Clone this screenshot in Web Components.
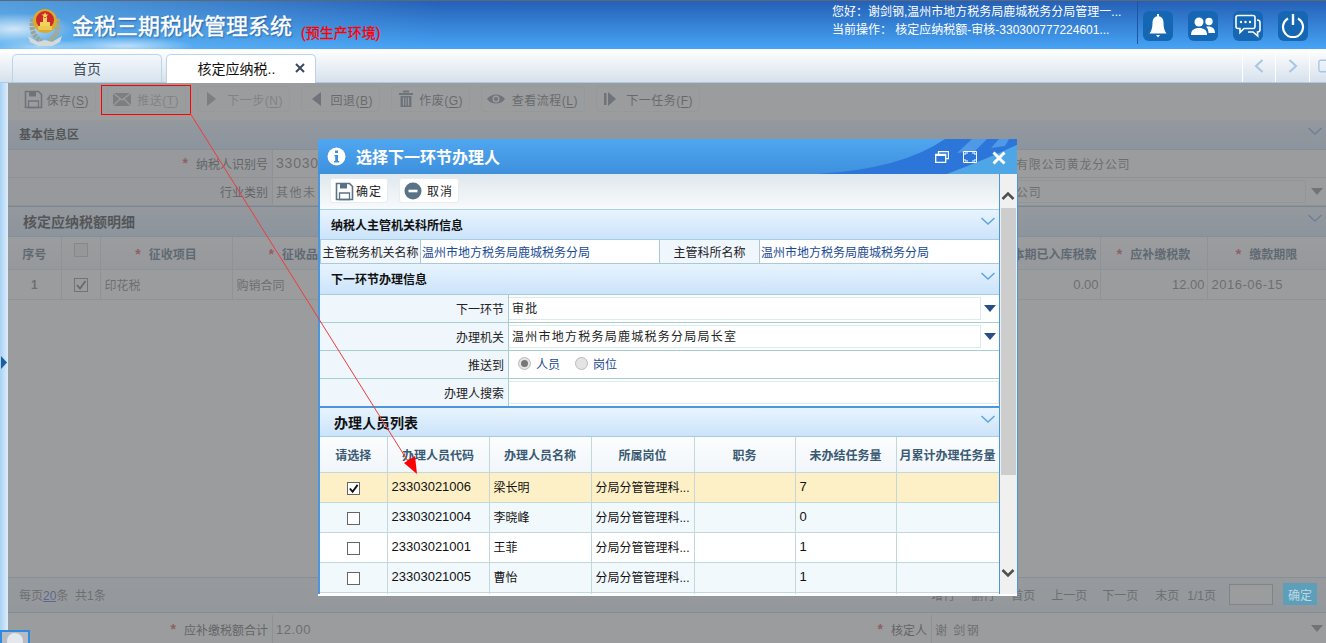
<!DOCTYPE html>
<html lang="zh">
<head>
<meta charset="utf-8">
<title>金税三期税收管理系统</title>
<style>
html, body { margin: 0; height: 100%; overflow: hidden; }
body { font: 12px "Liberation Sans", "Noto Sans CJK SC", sans-serif; color: #333; background: #fff; position: relative; }
</style>
</head>
<body>
<app-header></app-header>
<tab-strip></tab-strip>
<work-area></work-area>
<handler-dialog></handler-dialog>
<red-note></red-note>

<script>
const ICONS = {
    save: '<path d="M2.500 2.500h13l3 3v13h-16z" fill="none" stroke="currentColor" stroke-width="1.600"/><path d="M6 2.500h7v5H6z" fill="currentColor"/><path d="M5.500 12h10v6.500h-10z" fill="none" stroke="currentColor" stroke-width="1.300"/>',
    mail: '<path d="M1 4h18v13H1z" fill="currentColor"/><path d="M1 4l9 7 9-7M1 17l7-7M19 17l-7-7" fill="none" stroke="#fff" stroke-width="1.200"/>',
    next: '<path d="M5 3l9 7-9 7z" fill="currentColor"/>',
    back: '<path d="M15 3l-9 7 9 7z" fill="currentColor"/>',
    trash: '<path d="M7 2.500h6M3 5h14" stroke="currentColor" stroke-width="2"/><path d="M4.500 7h11v11h-11z" fill="currentColor"/><path d="M7.500 8.500v8M10 8.500v8M12.500 8.500v8" stroke="#fff"/>',
    eye: '<path d="M1 10c4-6 14-6 18 0-4 6-14 6-18 0z" fill="currentColor"/><circle cx="10" cy="10" r="3.500" fill="#fff"/><circle cx="10" cy="10" r="2" fill="currentColor"/>',
    last: '<path d="M3 4h2.500v12H3z" fill="currentColor"/><path d="M7 3l8 7-8 7z" fill="currentColor"/>',
    cancel: '<circle cx="10" cy="10" r="8.500" fill="currentColor"/><path d="M5.500 8.700h9v2.600h-9z" fill="#fff"/>'
}

const chevron = (color) => `<svg width="16" height="10" viewBox="0 0 16 10"><path d="M1.500 2l6.500 6 6.500-6" fill="none" stroke="${color}" stroke-width="1.400"/></svg>`
const caret = (color) => `<svg width="12" height="7" viewBox="0 0 12 7"><path d="M0 0h12L6 7z" fill="${color}"/></svg>`

class AppHeader extends HTMLElement {
    constructor() {
        super()
        this.attachShadow({ mode: "open" })
    }
    connectedCallback() {
        this.shadowRoot.innerHTML = `
        <style>
            :host {
                display: flex; align-items: stretch; height: 49px; box-sizing: border-box; color: #fff;
                border-top: 1px solid #5a6878;
                background:
                    radial-gradient(ellipse 60px 16px at 14px 28px, rgba(255,255,255,.72), transparent),
                    radial-gradient(ellipse 70px 9px at 125px 45px, rgba(255,255,255,.6), transparent),
                    radial-gradient(ellipse 50px 8px at 40px 46px, rgba(255,255,255,.45), transparent),
                    linear-gradient(90deg, rgba(110,190,240,.65), rgba(110,190,240,0) 440px),
                    linear-gradient(180deg, #2460b6, #47a4f5);
            }
            .logo { margin: 6px 0 0 27px; width: 36px; height: 41px; }
            h1 { margin: 12px 0 0 9px; font-size: 22px; line-height: 28px; font-weight: 400; -webkit-text-stroke: .4px #fff; text-shadow: 1px 1px 2px rgba(0,40,100,.6); white-space: nowrap; }
            .env { margin: 24px 0 0 9px; font-size: 14px; line-height: 17px; color: #f00; font-weight: 400; -webkit-text-stroke: .3px #f00; white-space: nowrap; }
            .user { margin-left: auto; width: 305px; font-size: 12px; line-height: 18px; padding-top: 2px; white-space: nowrap; }
            .icons { display: flex; gap: 15px; align-items: center; width: 189px; box-sizing: border-box; border-left: 1px solid #1d56a0; padding-left: 5px; margin-bottom: 5px; height: 43px; }
            .ic { width: 30px; height: 30px; border-radius: 6px; background: #1567b3; display: flex; align-items: center; justify-content: center; margin-top: 6px; }
        </style>
        <svg class="logo" viewBox="0 0 36 41">
            <path d="M6 12C3 22 7 31 15 34" fill="none" stroke="#9aa394" stroke-width="5" stroke-dasharray="3 1"/>
            <path d="M30 12c3 10-1 19-9 22" fill="none" stroke="#a8a888" stroke-width="5" stroke-dasharray="3 1"/>
            <path d="M1 29l10 6 7-2 7 2 10-6-2 6-8 4H11l-8-4z" fill="#d4d9da"/>
            <circle cx="18" cy="14" r="12" fill="#d8ab2f"/>
            <circle cx="18" cy="13" r="9" fill="#cb2a28"/>
            <path d="M11 19h14v4H11z" fill="#eec94f"/>
            <path d="M13 15h10v4H13zM16 11h4v4h-4z" fill="#f3d35f"/>
            <path d="M18 5l1 2.500h2.500l-2 1.500.8 2.500-2.300-1.600-2.300 1.600.8-2.500-2-1.500H17z" fill="#f7da5e"/>
        </svg>
        <h1>金税三期税收管理系统</h1>
        <span class="env">(预生产环境)</span>
        <div class="user">
            <div>您好：谢剑钢,温州市地方税务局鹿城税务分局管理一...</div>
            <div>当前操作： 核定应纳税额-审核-330300777224601...</div>
        </div>
        <div class="icons">
            <div class="ic"><svg width="18" height="24" viewBox="0 0 18 24"><path d="M8 0h2v2.200c3 .6 4.500 3 4.500 6.300 0 5 .8 8 3 11H.5c2.200-3 3-6 3-11C3.500 5.200 5 2.800 8 2.200z" fill="#fff"/><path d="M7 21h4l-2 2.500z" fill="#fff"/></svg></div>
            <div class="ic"><svg width="24" height="18" viewBox="0 0 24 18"><circle cx="8" cy="5" r="4.500" fill="#fff"/><path d="M0 18c0-5 3-7 8-7s8 2 8 7z" fill="#fff"/><circle cx="18" cy="4.500" r="3.700" fill="#fff"/><path d="M15 9.800c5-1 9 1 9 6.200h-6.500c0-3-1-5-2.500-6.200z" fill="#fff"/></svg></div>
            <div class="ic"><svg width="26" height="24" viewBox="0 0 26 24"><path d="M3 1.500h15c1.500 0 2 .8 2 2v9c0 1.300-.7 2-2 2H9l-4 4v-4H3c-1.300 0-2-.7-2-2v-9c0-1.200.7-2 2-2z" fill="none" stroke="#fff" stroke-width="1.600"/><path d="M22 6c2 0 3 1 3 2.500v7c0 1.500-1 2.500-2.500 2.500l.2 4-4.700-4h-5" fill="none" stroke="#fff" stroke-width="1.600"/><circle cx="6" cy="8" r="1.200" fill="#fff"/><circle cx="10.500" cy="8" r="1.200" fill="#fff"/><circle cx="15" cy="8" r="1.200" fill="#fff"/></svg></div>
            <div class="ic"><svg width="24" height="24" viewBox="0 0 24 24"><path d="M7 4.500a10 10 0 1 0 10 0" fill="none" stroke="#fff" stroke-width="2.200"/><path d="M12 0v11" stroke="#fff" stroke-width="2.400"/></svg></div>
        </div>`
    }
}

class TabStrip extends HTMLElement {
    constructor() {
        super()
        this.attachShadow({ mode: "open" })
    }
    connectedCallback() {
        this.shadowRoot.innerHTML = `
        <style>
            :host {
                display: flex; height: 34px; box-sizing: border-box; padding: 5px 0 0 12px; gap: 4px;
                background: linear-gradient(180deg, #fff, #d6e1ec);
                border-bottom: 1px solid #a9cbe9;
            }
            .tab {
                width: 150px; box-sizing: border-box; border: 1px solid #bcd3e8; border-bottom: 0; border-radius: 5px 5px 0 0;
                display: flex; align-items: center; justify-content: center; font-size: 14px; color: #3d4a58; position: relative; padding-bottom: 2px;
                background: linear-gradient(180deg, #f4f8fc, #d8e3ee);
            }
            .tab:first-child span { margin-right: 15px; }
            .tab.on { background: #fff; color: #111; margin-bottom: -1px; }
            .tab.on span { margin-right: 9px; }
            .x { position: absolute; right: 10px; top: 8px; }
            .nav { margin: -5px 0 0 auto; display: flex; }
            .nav div { width: 32px; border-left: 1px solid #fff; display: flex; align-items: center; justify-content: center; }
            .nav div + div { width: 33px; }
            .nav div:last-child { width: 17px; justify-content: flex-start; padding-left: 8px; box-sizing: border-box; }
        </style>
        <div class="tab"><span>首页</span></div>
        <div class="tab on"><span>核定应纳税..</span>
            <svg class="x" width="10" height="10" viewBox="0 0 10 10"><path d="M1 1l8 8M9 1l-8 8" stroke="#3a4a5e" stroke-width="2"/></svg>
        </div>
        <div class="nav">
            <div><svg width="10" height="16" viewBox="0 0 10 16"><path d="M8.500 2L2 8l6.500 6" fill="none" stroke="#a7c5e4" stroke-width="2"/></svg></div>
            <div><svg width="10" height="16" viewBox="0 0 10 16"><path d="M1.500 2L8 8l-6.500 6" fill="none" stroke="#a7c5e4" stroke-width="2"/></svg></div>
            <div><svg width="9" height="16" viewBox="0 0 9 16"><path d="M9 1.500H3a2 2 0 0 0-2 2v9a2 2 0 0 0 2 2h6" fill="none" stroke="#a7c5e4" stroke-width="1.500"/></svg></div>
        </div>`
    }
}

class ToolBtn extends HTMLElement {
    constructor() {
        super()
        this.attachShadow({ mode: "open" })
    }
    connectedCallback() {
        const icon = ICONS[this.getAttribute('icon')]
        const w = this.getAttribute('w') || 60
        this.shadowRoot.innerHTML = `
        <style>
            :host {
                display: flex; align-items: center; justify-content: space-between; box-sizing: border-box;
                width: ${w}px; height: 26px; padding: 0 6px 0 4px; border: 1px solid #f0f0f0; border-radius: 3px;
                background: #fff; font-size: 12px; letter-spacing: .5px; white-space: nowrap;
                color: var(--btn-color, #555);
            }
            svg { width: 20px; height: 20px; color: var(--icon-color, #6a7885); flex: none; }
            ::slotted(u) { text-underline-offset: 2px; }
        </style>
        <svg viewBox="0 0 20 20">${icon}</svg><span><slot></slot></span>`
    }
}

class SectionHead extends HTMLElement {
    constructor() {
        super()
        this.attachShadow({ mode: "open" })
    }
    connectedCallback() {
        this.shadowRoot.innerHTML = `
        <style>
            :host {
                display: flex; align-items: center; justify-content: space-between; box-sizing: border-box;
                height: 30px; padding: 0 3px 1px var(--head-pad, 11px); font-size: 12px; font-weight: 700; color: #111;
                background: linear-gradient(180deg, #e8f4fe, #cbe3fa);
            }
            svg { margin-top: -6px; }
        </style>
        <span><slot></slot></span>${chevron('#5aa2e0')}`
    }
}

class WorkArea extends HTMLElement {
    constructor() {
        super()
        this.attachShadow({ mode: "open" })
    }
    connectedCallback() {
        const star = '<i>*</i>'
        const box = caret('#777')
        this.shadowRoot.innerHTML = `
        <style>
            :host { display: flex; height: 560px; position: relative; }
            .rail { width: 8px; flex: none; background: linear-gradient(90deg, #a9d2f4, #dcedfb); display: flex; align-items: center; }
            .rail svg { margin-top: -2px; }
            .main { flex: 1; min-width: 0; display: flex; flex-direction: column; background: #fff; overflow: hidden; color: #444; }
            .bar { display: flex; gap: 11px; align-items: center; height: 37px; padding: 0 0 5px 10px; box-sizing: border-box; background: #fff; flex: none; }
            section-head { flex: none; border-bottom: 1px solid #b4d2e6; }
            .form { display: grid; grid-template-columns: 264px 744px 1fr; flex: none; }
            .form > div { border-bottom: 1px solid #c8dfe5; display: flex; align-items: center; padding-bottom: 1px; box-sizing: content-box; height: 26px; }
            .lab { justify-content: flex-end; padding-right: 4px; background: #f0f6fb; }
            .val { border-left: 1px solid #c8dfe5; padding-left: 3px; color: #666; letter-spacing: 1.5px; }
            .val.num { font-size: 14px; letter-spacing: .8px; }
            .cut { display: inline-block; width: 42px; overflow: hidden; white-space: nowrap; vertical-align: middle; }
            .far { letter-spacing: .7px; color: #666; position: relative; }
            .far svg { position: absolute; right: 3px; top: 10px; }
            .far.box::before { content: ""; position: absolute; left: -4px; right: 20px; top: 2px; bottom: 2px; border: 1px solid #dfe9ee; }
            i { color: #d9303a; font-style: normal; font-weight: 700; font-size: 14px; margin-right: 8px; }
            table { border-collapse: collapse; table-layout: fixed; width: 1318px; flex: none; }
            td, th { border: 1px solid #d3e2e8; border-width: 0 1px 1px 0; padding: 0 4px; font-size: 12px; white-space: nowrap; overflow: hidden; }
            th { height: 32px; font-weight: 700; color: #38566e; background: linear-gradient(180deg, #fff, #eef3f8); }
            td { height: 29px; color: #666; background: #fff; }
            .box2 { display: inline-block; width: 12px; height: 12px; border: 1px solid #777; vertical-align: middle; position: relative; background: #fff; }
            .box2.light { border-color: #bbb; background: #eee; margin-top: -8px; }
            .box2 svg { position: absolute; left: 0; top: 0; }
            .space { flex: 1; }
            .pager { height: 36px; flex: none; box-sizing: border-box; border-top: 1px solid #c0d6e6; border-bottom: 1px solid #a9cbe6; display: flex; align-items: center; padding: 0 9px 2px 11px; background: linear-gradient(180deg,#f2f7fb,#e6eff6); color: #666; }
            .pager u { color: #3a49c0; }
            .links { margin-left: auto; display: flex; align-items: center; }
            .links b { font-weight: 400; }
            .in { width: 44px; height: 21px; box-sizing: border-box; border: 1px solid #aaa; background: #fff; margin: 0 10px 0 13px; }
            .ok { width: 34px; height: 22px; background: #5d9fb9; color: #bcd8e6; display: flex; align-items: center; justify-content: center; position: relative; z-index: 2; }
            .foot { display: grid; grid-template-columns: 264px 396px 263px 1fr; height: 28px; margin-top: 2px; flex: none; }
            .foot div { display: flex; align-items: center; }
            .foot .lab { background: #fff; }
            .foot .v { border-left: 1px solid #c8dfe5; padding-left: 3px; color: #666; font-size: 13px; position: relative; letter-spacing: .5px; }
            .foot .v svg { position: absolute; right: 3px; top: 10px; }
            .mask { position: absolute; left: 8px; top: 0; right: 0; bottom: 0; background: rgba(112,114,117,.7); }
            .badge { position: absolute; left: 0; bottom: 0; width: 30px; height: 13px; box-sizing: border-box; border: 2px solid #2e8be0; border-bottom: 0; background: #b8bcc2; display: flex; justify-content: center; overflow: hidden; }
            .badge span { width: 16px; height: 16px; border-radius: 50%; background: #e4e8ec; margin-top: 1px; }
        </style>
        <div class="rail"><svg width="7" height="13" viewBox="0 0 7 13"><path d="M1 0l6 6.500L1 13z" fill="#1b5ea8"/></svg></div>
        <div class="main">
            <div class="bar">
                <tool-btn icon="save" w="78">保存(<u>S</u>)</tool-btn>
                <tool-btn icon="mail" w="79" style="--btn-color:#aaa;--icon-color:#999">推送(<u>T</u>)</tool-btn>
                <tool-btn icon="next" w="93" style="--btn-color:#aaa;--icon-color:#999">下一步(<u>N</u>)</tool-btn>
                <tool-btn icon="back" w="79">回退(<u>B</u>)</tool-btn>
                <tool-btn icon="trash" w="79">作废(<u>G</u>)</tool-btn>
                <tool-btn icon="eye" w="104">查看流程(<u>L</u>)</tool-btn>
                <tool-btn icon="last" w="104">下一任务(<u>F</u>)</tool-btn>
            </div>
            <section-head style="padding-bottom:2px">基本信息区</section-head>
            <div class="form">
                <div class="lab">${star}纳税人识别号</div><div class="val num"><span class="cut">330300</span></div><div class="far">有限公司黄龙分公司</div>
                <div class="lab">行业类别</div><div class="val"><span class="cut">其他未</span></div><div class="far box">公司${box}</div>
            </div>
            <section-head style="--head-pad:15px;height:31px;font-size:14px;border-top:1px solid #8fb5d6">核定应纳税额明细</section-head>
            <table>
                <colgroup><col style="width:53px"><col style="width:39px"><col style="width:132px"><col style="width:132px"><col style="width:736px"><col style="width:107px"><col style="width:119px"></colgroup>
                <tr><th>序号</th><th><span class="box2 light"></span></th><th>${star}征收项目</th><th style="text-align:left;padding-left:36px"><span class="cut" style="width:50px">${star}征收品</span></th><th style="text-align:right;padding-right:3px">本期已入库税款</th><th>${star}应补缴税款</th><th>${star}缴款期限</th></tr>
                <tr><td style="text-align:center;font-weight:700">1</td><td style="text-align:center"><span class="box2"><svg width="12" height="12" viewBox="0 0 12 12"><path d="M2 6l3 3.500L10.500 2" fill="none" stroke="#555" stroke-width="1.800"/></svg></span></td><td>印花税</td><td>购销合同</td><td style="text-align:right;padding-right:1px;font-size:13px">0.00</td><td style="text-align:right;padding-right:2px;font-size:13px">12.00</td><td style="padding-left:4px;letter-spacing:.5px;font-size:13px">2016-06-15</td></tr>
            </table>
            <div class="space"></div>
            <div class="pager">
                <span>每页<u>20</u>条&nbsp;&nbsp;共1条</span>
                <div class="links">
                    <span style="width:40px">增行</span><span style="width:40px">删行</span><span style="width:40px">首页</span><span style="width:51px">上一页</span><span style="width:53px">下一页</span><span style="width:32px">末页</span><b>1/1页</b>
                    <span class="in"></span><span class="ok">确定</span>
                </div>
            </div>
            <div class="foot">
                <div class="lab">${star}应补缴税额合计</div><div class="v">12.00</div>
                <div class="lab">${star}核定人</div><div class="v" style="font-size:12px;letter-spacing:1.500px">谢 剑钢${box}</div>
            </div>
        </div>
        <div class="mask"></div>
        <div class="badge"><span></span></div>`
    }
}

class HandlerDialog extends HTMLElement {
    constructor() {
        super()
        this.attachShadow({ mode: "open" })
    }
    connectedCallback() {
        const rows = [
            ['23303021006', '梁长明', '7', true],
            ['23303021004', '李晓峰', '0'],
            ['23303021001', '王菲', '1'],
            ['23303021005', '曹怡', '1']
        ]
        const check = '<svg width="11" height="11" viewBox="0 0 12 12"><path d="M2 6l3 3.500L10.500 2" fill="none" stroke="#111" stroke-width="2"/></svg>'
        const rowHtml = rows.map((r) => `
            <tr class="${r[3] ? 'sel' : ''}"><td class="c"><span class="ck">${r[3] ? check : ''}</span></td><td class="n">${r[0]}</td><td>${r[1]}</td><td>分局分管管理科...</td><td></td><td class="n">${r[2]}</td><td></td></tr>`).join('')
        const arrow = caret('#2a4f86')
        this.shadowRoot.innerHTML = `
        <style>
            :host {
                position: absolute; left: 318px; top: 139px; width: 700px; height: 457px;
                display: flex; flex-direction: column; color: #222; font-size: 12px;
            }
            .title {
                width: 699px; height: 35px; flex: none; display: flex; align-items: center; position: relative; color: #fff; overflow: hidden;
                background: linear-gradient(180deg, #4fa6ef, #3e90dd);
            }
            .title > svg.sw { position: absolute; right: 0; top: 0; }
            .title h2 { margin: -2px 0 0 10px; font-size: 16px; font-weight: 700; position: relative; }
            .info { margin-left: 9px; position: relative; }
            .ctl { position: absolute; right: 11px; top: 12px; display: flex; gap: 14px; align-items: flex-start; }
            .ctl svg:last-child { margin-left: 1px; }
            .body { height: 420px; flex: none; display: flex; background: #fff; }
            .left { width: 679px; flex: none; border-left: 2px solid #4a97dd; border-right: 1px solid #4a97dd; overflow: hidden; display: flex; flex-direction: column; }
            .strip { width: 699px; height: 2px; background: #fff; flex: none; }
            .tools { height: 36px; flex: none; box-sizing: border-box; display: flex; gap: 11px; align-items: flex-start; padding: 4px 0 0 10px; background: linear-gradient(180deg, #dfe8ee, #f8fafb); border-bottom: 1px solid #a9d0ec; --btn-color: #222; --icon-color: #5a7286; }
            .tools tool-btn { height: 25px; border-color: #e8ecef; padding: 0 5px 0 3px; letter-spacing: 1px; }
            section-head { flex: none; border-bottom: 1px solid #a5cfe0; }
            .a { display: grid; grid-template-columns: 101px 238px 101px 1fr; height: 24px; box-sizing: border-box; flex: none; border-bottom: 1px solid #a9c9d4; }
            .a div { display: flex; align-items: center; white-space: nowrap; overflow: hidden; padding-bottom: 1px; }
            .a .l { background: #eff6fc; justify-content: center; border: 0 solid #a9c9d4; border-width: 0 1px; }
            .a .v { color: #1a4a94; padding-left: 1px; }
            .b { display: grid; grid-template-columns: 189px 1fr; height: 28px; flex: none; border-bottom: 1px solid #a6cfd1; box-sizing: border-box; }
            .b .l { background: #eff6fc; display: flex; align-items: center; justify-content: flex-end; padding: 0 4px 1px 0; border-right: 1px solid #a6cfd1; }
            .b .v { display: flex; align-items: center; position: relative; padding: 0 0 3px 3px; letter-spacing: 1.250px; }
            .b .v.sel::before { content: ""; position: absolute; left: 0; right: 18px; top: 2px; bottom: 2px; border: 1px solid #dcebed; border-left: 0; }
            .b .v.wide::before { right: 0; }
            .b .v svg { position: absolute; right: 3px; top: 10px; }
            .r { display: flex; align-items: center; margin: 0 9px 0 6px; color: #1a4a94; letter-spacing: 0; }
            .r span { width: 11px; height: 11px; border-radius: 50%; background: #e4e4e4; border: 1px solid #bbb; margin-right: 5px; display: flex; align-items: center; justify-content: center; }
            .r span::after { content: ""; width: 7px; height: 7px; border-radius: 50%; background: var(--dot, transparent); }
            .list { --head-pad: 14px; border-top: 2px solid #4a97dd; height: 31px; margin-top: -1px; font-size: 14px; }
            table { border-collapse: collapse; table-layout: fixed; width: 679px; }
            th, td { border: 1px solid #c2d8da; border-width: 0 1px 1px 0; padding: 0 4px 2px; white-space: nowrap; overflow: hidden; font-size: 12px; }
            th { height: 34px; color: #3a5a74; font-weight: 700; background: linear-gradient(180deg, #fbfcfd, #f1f6fa); padding: 0; }
            td { height: 27px; color: #111; text-align: left; }
            td.n { font-size: 13px; }
            tr:nth-child(odd) td { background: #f1f9fd; }
            tr.sel td { background: #fdf0c6; }
            tr.blank td { background: #fff; }
            td.c { text-align: center; padding: 0; }
            .ck { display: inline-block; width: 11px; height: 11px; border: 1px solid #666; background: #fff; vertical-align: middle; position: relative; }
            .ck svg { position: absolute; left: 0; top: 0; }
            .sb { width: 17px; flex: none; box-sizing: content-box; border-right: 1px solid #4a97dd; background: #f0f0f0; position: relative; }
            .sb .t { width: 15px; left: 1px; position: absolute; top: 34px; height: 267px; background: #cdcdcd; }
            .sb svg { position: absolute; }
        </style>
        <div class="title">
            <svg class="sw" width="330" height="35" viewBox="0 0 330 35"><path d="M130 35Q215 30 258 0H330V6Q300 20 260 35z" fill="#2b76d8"/><path d="M260 35Q300 20 330 6V35z" fill="#4ea6e6"/><path d="M285 0l-15 14 18-2 12-12zM312 0l-8 9 14-2 4-7z" fill="#4f99e8"/></svg>
            <svg class="info" width="19" height="19" viewBox="0 0 19 19"><circle cx="9.500" cy="9.500" r="9" fill="#fff"/><path d="M8 3.500h3V6H8zM7.500 8H11v6h1.200v1.500H7V14h1.200V9.500h-.7z" fill="#3e90dd"/></svg>
            <h2>选择下一环节办理人</h2>
            <div class="ctl">
                <svg width="14" height="12" viewBox="0 0 14 12"><path d="M3.500 3V.700h10v7H11" fill="none" stroke="#fff" stroke-width="1.300"/><path d="M.700 3.500h10v8H.700z" fill="none" stroke="#fff" stroke-width="1.300"/><path d="M.700 4h10" stroke="#fff" stroke-width="2"/></svg>
                <svg width="14" height="12" viewBox="0 0 14 12"><path d="M.500.500h13v11H.500z" fill="none" stroke="#fff"/><path d="M2 4V2h3M9 2h3v2M12 8v2H9M5 10H2V8" fill="none" stroke="#fff"/></svg>
                <svg width="14" height="14" viewBox="0 0 14 14"><path d="M1.500 1.500l11 11M12.500 1.500l-11 11" stroke="#fff" stroke-width="3"/></svg>
            </div>
        </div>
        <div class="body">
            <div class="left">
                <div class="tools">
                    <tool-btn icon="save" w="58">确定</tool-btn>
                    <tool-btn icon="cancel" w="60">取消</tool-btn>
                </div>
                <section-head>纳税人主管机关科所信息</section-head>
                <div class="a">
                    <div class="l">主管税务机关名称</div><div class="v">温州市地方税务局鹿城税务分局</div>
                    <div class="l">主管科所名称</div><div class="v">温州市地方税务局鹿城税务分局</div>
                </div>
                <section-head style="height:31px">下一环节办理信息</section-head>
                <div class="b"><div class="l">下一环节</div><div class="v sel">审批${arrow}</div></div>
                <div class="b"><div class="l">办理机关</div><div class="v sel">温州市地方税务局鹿城税务分局局长室${arrow}</div></div>
                <div class="b"><div class="l">推送到</div><div class="v"><div class="r" style="--dot:#777"><span></span>人员</div><div class="r"><span></span>岗位</div></div></div>
                <div class="b"><div class="l">办理人搜索</div><div class="v sel wide"></div></div>
                <section-head class="list">办理人员列表</section-head>
                <table>
                    <colgroup><col style="width:67px"><col style="width:102px"><col style="width:102px"><col style="width:103px"><col style="width:101px"><col style="width:101px"><col style="width:103px"></colgroup>
                    <tr><th style="height:35px">请选择</th><th>办理人员代码</th><th>办理人员名称</th><th>所属岗位</th><th>职务</th><th>未办结任务量</th><th>月累计办理任务量</th></tr>
                    ${rowHtml}
                    <tr class="blank"><td></td><td></td><td></td><td></td><td></td><td></td><td></td></tr>
                </table>
            </div>
            <div class="sb">
                <div class="t"></div>
                <svg style="top:17px;left:1px" width="14" height="10" viewBox="0 0 14 10"><path d="M1.500 8L7 2.500 12.500 8" fill="none" stroke="#505050" stroke-width="2.600"/></svg>
                <svg style="bottom:16px;left:1px" width="14" height="10" viewBox="0 0 14 10"><path d="M1.500 2L7 7.500 12.500 2" fill="none" stroke="#505050" stroke-width="2.600"/></svg>
            </div>
        </div>
        <div class="strip"></div>`
    }
}

class RedNote extends HTMLElement {
    constructor() {
        super()
        this.attachShadow({ mode: "open" })
    }
    connectedCallback() {
        this.shadowRoot.innerHTML = `
        <style>
            :host { position: absolute; left: 0; top: 0; width: 1326px; height: 643px; pointer-events: none; }
        </style>
        <svg width="1326" height="643" viewBox="0 0 1326 643">
            <rect x="101" y="85" width="89" height="29" fill="none" stroke="#f00" stroke-width="1" shape-rendering="crispEdges"/>
            <path d="M190 113L409 463" stroke="#f23a3a" stroke-width="1"/>
            <path d="M404 463L415 456 417 474z" fill="#f00"/>
        </svg>`
    }
}

customElements.define("tool-btn", ToolBtn)
customElements.define("section-head", SectionHead)
customElements.define("app-header", AppHeader)
customElements.define("tab-strip", TabStrip)
customElements.define("work-area", WorkArea)
customElements.define("handler-dialog", HandlerDialog)
customElements.define("red-note", RedNote)
</script>
</body>
</html>
